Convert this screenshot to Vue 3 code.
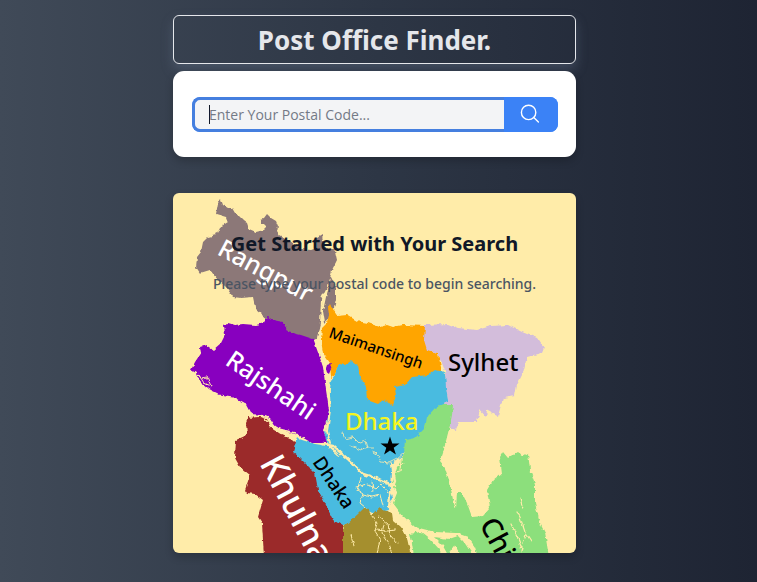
<script setup>
import { ref } from 'vue'

const code = ref('')

const regions = [
  { name: 'dhaka', fill: '#4abbe0', d: 'M158 187L162 182L165 168L187 166L220 190L262 174L272 180L274 194L275 207L272 216L256 240L234 250L231 262L220 270L218 291L204 289L189 284L175 271L159 254L154 249L151 243L155 232L153 225L157 214L156 205Z' },
  { name: 'dhaka-south', fill: '#4abbe0', d: 'M124 244L129 247L142 251L155 253L165 262L182 272L187 282L202 288L216 292L220 304L215 316L200 320L192 318L175 332L169 334L150 320L134 280L118 262Z' },
  { name: 'rangpur', fill: '#8c7878', d: 'M48 6L50 12L55 15L59 15L62 20L66 23L70 27L74 30L76 36L83 39L91 37L93 35L88 30L88 26L91 25L94 21L98 25L103 28L105 33L104 38L107 43L117 48L128 56L138 57L144 55L144 45L149 42L151 54L162 58L164 67L159 77L157 85L155 94L150 104L148 127L144 146L136 147L115 142L95 127L83 117L82 114L80 104L68 105L60 104L53 94L45 87L37 77L27 80L23 74L24 64L28 59L30 49L35 44L43 42L47 34L55 29L53 24L43 21L45 10Z' },
  { name: 'rangpur-bank', fill: '#8c7878', d: 'M158 84L163 94L163 107L161 115L156 125L152 130L150 118L153 104L156 94Z' },
  { name: 'rajshahi', fill: '#8800bf', d: 'M91 130L92 125L95 124L100 127L110 129L115 139L128 142L140 146L143 154L147 165L150 174L153 197L156 217L154 229L150 237L154 250L139 250L127 243L115 239L103 234L97 225L90 222L78 221L72 210L63 205L50 203L38 197L28 190L23 180L18 177L22 169L28 160L27 154L33 152L40 157L48 150L52 142L51 132L55 130L62 132L70 131L82 132Z' },
  { name: 'mymensingh', fill: '#ffa500', d: 'M157 111L160 117L164 123L174 122L184 128L195 130L207 134L214 132L220 134L230 132L252 133L253 147L256 157L265 160L269 179L262 177L255 182L239 184L232 192L222 194L223 204L220 212L210 207L205 211L194 207L193 194L187 184L185 172L179 168L174 172L165 171L162 182L158 185L157 170L150 160L148 147L149 135L154 130L156 122L155 114Z' },
  { name: 'sylhet', fill: '#d3bddb', d: 'M252 132L275 131L285 135L304 137L318 133L335 132L349 139L364 145L371 155L369 160L354 164L350 180L344 192L342 203L330 205L325 223L314 217L313 224L307 217L304 229L285 229L283 238L277 236L271 211L275 207L273 194L272 178L265 160L254 157L251 147Z' },
  { name: 'khulna', fill: '#9b2929', d: 'M76 223L94 225L97 234L109 242L123 248L120 259L125 263L134 272L142 280L145 297L152 310L160 327L170 333L170 364L91 364L89 330L85 324L90 307L82 301L74 300L72 297L77 282L67 274L62 265L63 247L74 242L73 230Z' },
  { name: 'barisal', fill: '#a58f2d', d: 'M170 335L184 322L192 314L199 322L207 315L219 320L220 327L228 334L234 345L238 364L170 364Z' },
  { name: 'chittagong', fill: '#8cdf7b', d: 'M232 247L242 245L252 235L254 224L262 215L270 212L280 212L279 222L277 232L274 244L270 260L267 269L272 275L277 290L280 307L283 315L284 300L289 300L294 310L299 324L310 323L317 315L314 297L320 287L329 280L327 264L330 259L335 265L345 259L350 263L355 260L357 277L362 292L362 310L367 330L372 340L376 364L305 364L302 354L295 344L283 340L262 339L242 334L229 322L220 310L224 300L219 290L224 274L231 261Z' },
  { name: 'delta-west', fill: '#8cdf7b', d: 'M237 341L248 339L258 347L266 356L269 364L241 364L239 350Z' },
  { name: 'delta-mid', fill: '#8cdf7b', d: 'M261 344L276 346L285 343L291 349L301 364L289 364L281 351L276 364L270 353Z' },
  { name: 'char-upper', fill: '#8800bf', d: 'M154 172L159 170L158 176L156 181L152 178Z' }
]

const channels = [
  { width: 2, d: 'M154 96L149 106L148 130L145 146L149 164L155 188L157 218L154 238L157 250' },
  { width: 2.4, d: 'M150 251L160 253L176 267L190 281L206 286L222 293' },
  { width: 2.4, d: 'M219 271L222 288L217 302L216 315L229 330L237 349L239 362' },
  { width: 0.8, d: 'M169 239L172 246L180 244L186 250L193 248L195 255L201 255M178 253L188 257L195 254' },
  { width: 0.8, d: 'M200 259L205 262L208 269L216 270L224 266L231 260' },
  { width: 1, d: 'M188 285L184 297L190 301L187 310L193 315M183 294L195 291L203 296L208 291L215 300M190 302L199 304L207 302L210 313M199 289L200 298' },
  { width: 1, d: 'M196 319L204 330L202 338L207 346L204 361M206 324L215 331L217 342L224 350M203 337L214 338L222 337M211 331L209 340L216 350L219 362M181 353L178 342' },
  { width: 1.2, d: 'M228 266L227 278L219 280M223 273L231 271' },
  { width: 1.2, d: 'M347 305L350 316M344 319L347 324L352 339L358 348M338 331L344 343L349 356M353 342L350 350L347 362' },
  { width: 1, d: 'M25 181L28 185L34 184L38 193L31 190L25 181' },
  { width: 1.4, d: 'M78 224L89 223L97 230L106 236L122 240L127 246' }
]

const labels = [
  { text: 'Rangpur', x: 43, y: 61, angle: 28, size: 25, fill: '#fff' },
  { text: 'Rajshahi', x: 51, y: 171, angle: 34, size: 25, fill: '#fff' },
  { text: 'Maimansingh', x: 155, y: 144, angle: 19, size: 15, fill: '#000' },
  { text: 'Sylhet', x: 275, y: 178, angle: 0, size: 24, fill: '#000' },
  { text: 'Dhaka', x: 172, y: 237, angle: 0, size: 24, fill: '#f4f51e' },
  { text: 'Dhaka', x: 139, y: 269, angle: 56, size: 19, fill: '#000' },
  { text: 'Khulna', x: 86, y: 270, angle: 62, size: 35, fill: '#fff' },
  { text: 'Chi', x: 306, y: 331, angle: 62, size: 28, fill: '#000' }
]
</script>

<template>
  <main class="page">
    <div class="column">
      <header class="banner">
        <h1>Post Office Finder.</h1>
      </header>

      <section class="panel">
        <form class="search" @submit.prevent>
          <input v-model="code" type="text" aria-label="Postal code" placeholder="Enter Your Postal Code..." />
          <button type="submit" aria-label="Search">
            <svg viewBox="0 0 20 20" width="20" height="20" fill="none" stroke="currentColor" stroke-width="1.4" stroke-linecap="round">
              <circle cx="8.6" cy="8.4" r="7.2" />
              <path d="M13.8 13.6L18.4 18.1" />
            </svg>
          </button>
        </form>
      </section>

      <section class="hero">
        <svg class="map" viewBox="0 0 403 360" preserveAspectRatio="xMidYMin slice" aria-hidden="true">
          <defs>
            <filter id="coast" x="0" y="0" width="403" height="360" filterUnits="userSpaceOnUse">
              <feTurbulence type="fractalNoise" baseFrequency="0.2" numOctaves="2" seed="4" result="noise" />
              <feDisplacementMap in="SourceGraphic" in2="noise" scale="4" xChannelSelector="R" yChannelSelector="G" />
            </filter>
          </defs>
          <g filter="url(#coast)">
            <path v-for="r in regions" :key="r.name" :d="r.d" :fill="r.fill" />
            <path
              v-for="(c, i) in channels" :key="i" :d="c.d" :stroke-width="c.width"
              fill="none" stroke="#ffeca9" stroke-linejoin="round" stroke-linecap="round"
            />
          </g>
          <path d="M217 243.500L219.300 250.400L226.500 250.400L220.700 254.700L222.900 261.600L217 257.400L211.100 261.600L213.300 254.700L207.500 250.400L214.700 250.400Z" />
          <text
            v-for="(l, i) in labels" :key="i" class="place"
            :transform="`translate(${l.x} ${l.y}) rotate(${l.angle})`" :font-size="l.size" :fill="l.fill"
          >{{ l.text }}</text>
        </svg>
        <div class="intro">
          <h2>Get Started with Your Search</h2>
          <p>Please type your postal code to begin searching.</p>
        </div>
      </section>
    </div>
  </main>
</template>

<style>
body {
  margin: 0;
}
</style>

<style scoped>
.page {
  box-sizing: border-box;
  min-height: 100vh;
  padding: 15px 16px 29px 8px;
  background: linear-gradient(to right, #404a58, #2d3645 50%, #1e2433);
  font-family: "Noto Sans", "Open Sans", sans-serif;
}
.column {
  display: flex;
  flex-direction: column;
  max-width: 403px;
  margin: 0 auto;
}
.banner {
  border: 1px solid #e5e7eb;
  border-radius: 6px;
  box-shadow: 0 6px 12px rgba(100, 116, 139, 0.4);
  text-align: center;
}
h1 {
  margin: 0;
  padding-top: 1px;
  color: #e5e7eb;
  font-size: 26px;
  line-height: 46px;
  font-weight: 700;
}
.panel {
  position: relative;
  margin-top: 7px;
  padding: 26px 18px 25px 19px;
  border-radius: 11px;
  background: #fff;
  box-shadow: 0 4px 8px rgba(0, 0, 0, 0.2);
}
.search {
  display: flex;
  height: 35px;
  overflow: hidden;
  border-radius: 8px;
  background: #3b82f6;
}
input {
  box-sizing: border-box;
  flex: 1;
  min-width: 0;
  padding: 0 14px;
  border: 3px solid #457fdf;
  border-right: 0;
  border-radius: 8px 0 0 8px;
  outline: 0;
  background: linear-gradient(#111827, #111827) 14px 5px / 1px 19px no-repeat #f3f4f6;
  color: #111827;
  font: 14px "Open Sans", "Noto Sans", sans-serif;
}
input::placeholder {
  color: #747a86;
  opacity: 1;
}
button {
  display: flex;
  align-items: center;
  justify-content: center;
  width: 54px;
  padding: 0 2px 2px 0;
  border: 0;
  background: #3b82f6;
  color: #fff;
}
.hero {
  display: grid;
  min-height: 360px;
  margin-top: 36px;
  overflow: hidden;
  border-radius: 6px;
  background: #ffeca9;
  box-shadow: 0 4px 8px rgba(0, 0, 0, 0.2);
}
.map {
  grid-area: 1 / 1;
  width: 100%;
  height: 100%;
}
.place {
  font-weight: 500;
}
.intro {
  grid-area: 1 / 1;
  z-index: 1;
  padding-top: 36px;
  text-align: center;
}
h2 {
  margin: 0;
  color: #111827;
  font-size: 20px;
  line-height: 30px;
  font-weight: 700;
}
p {
  margin: 15px 0 0;
  color: #4b5563;
  font-size: 14px;
  line-height: 20px;
  font-weight: 500;
}
</style>
